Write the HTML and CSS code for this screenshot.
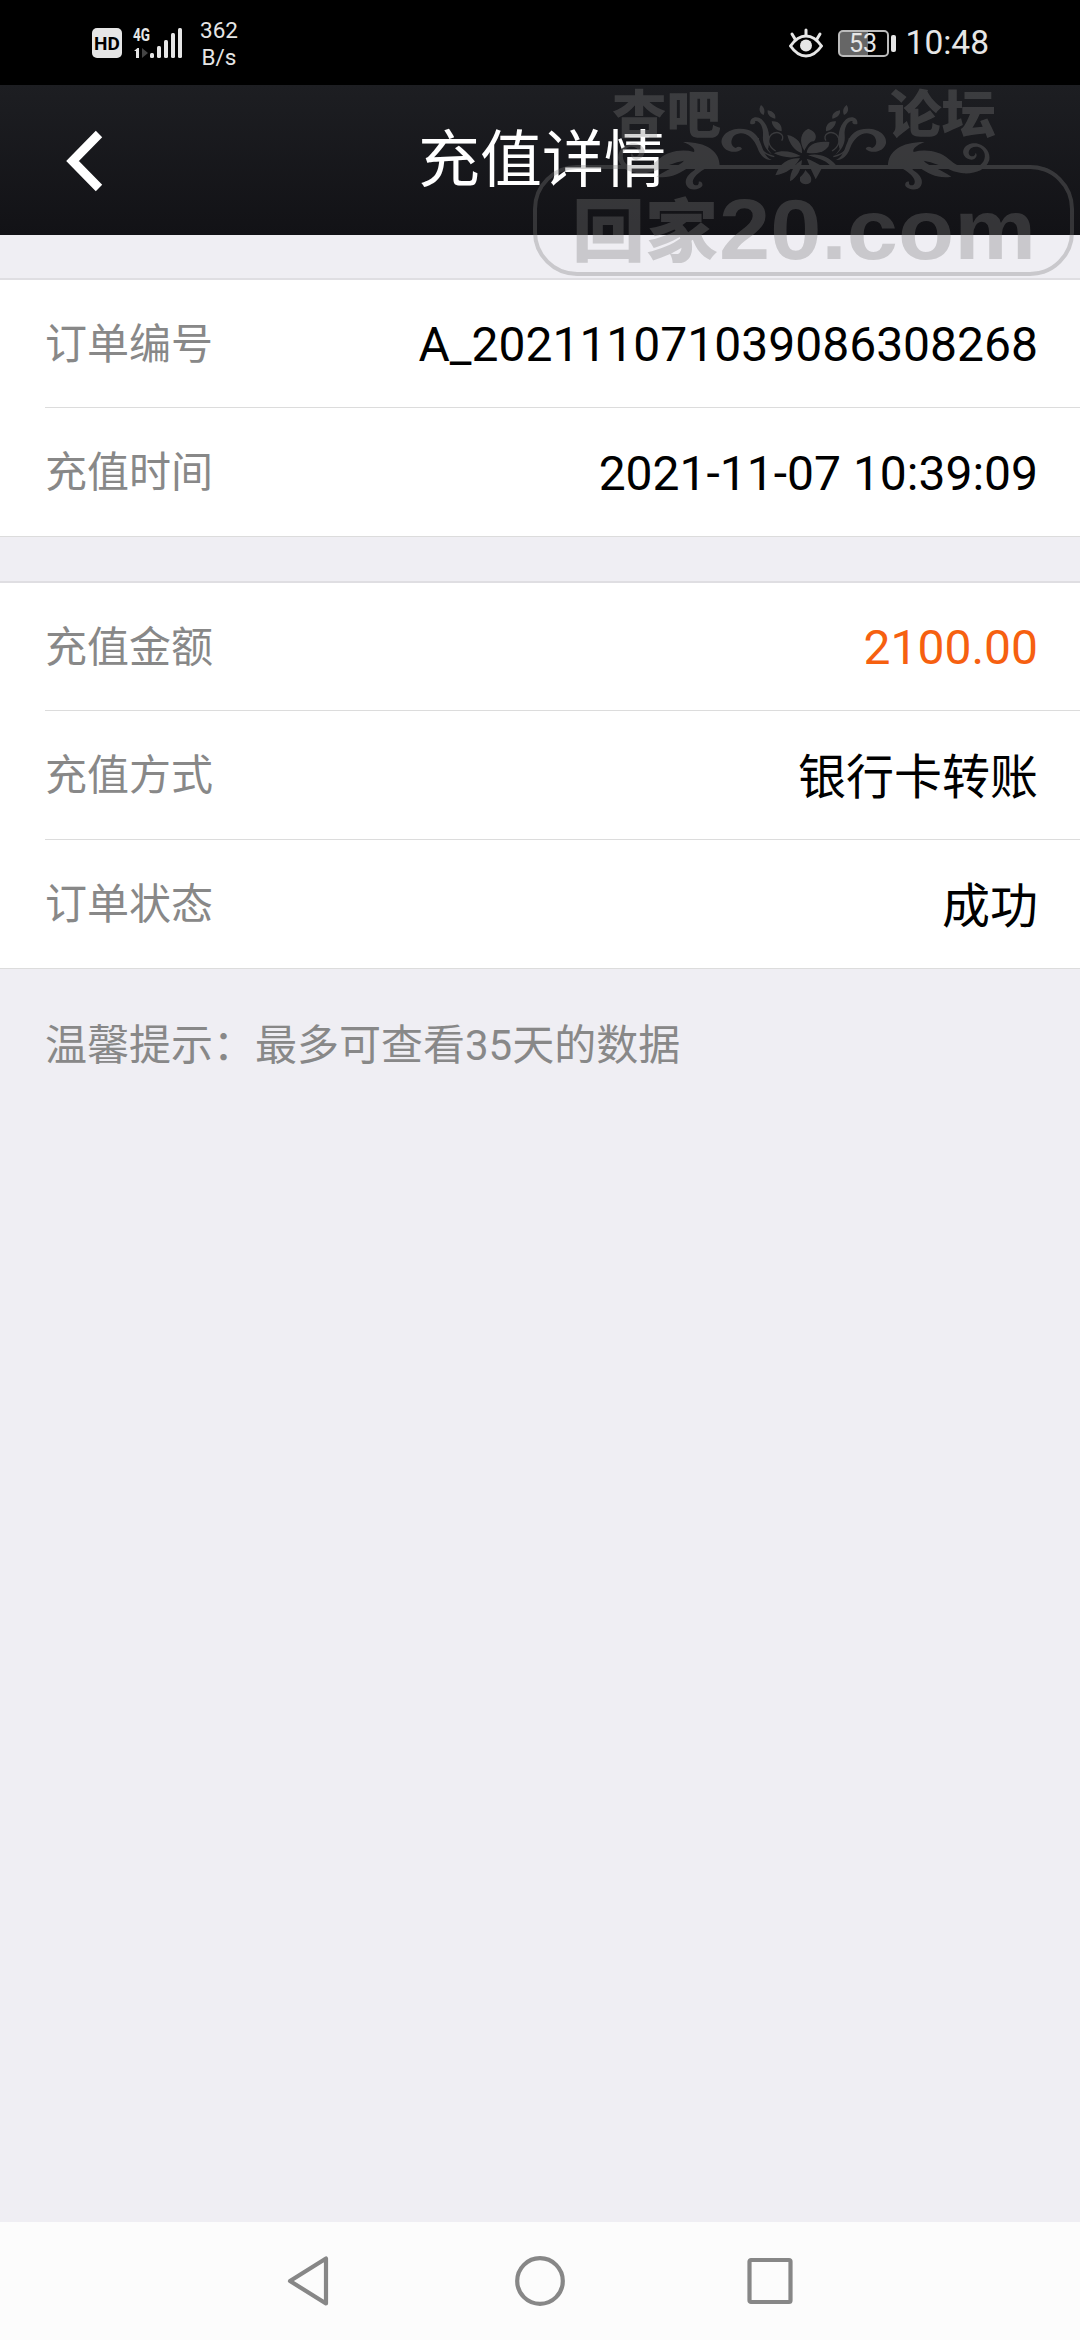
FILE: index.html
```
<!DOCTYPE html>
<html lang="zh-CN">
<head>
  <meta charset="UTF-8">
  <meta name="viewport" content="width=device-width, initial-scale=1.0">
  <title>充值详情</title>
  <link rel="stylesheet" href="styles.css">
</head>
<body>
  <div class="page">
    <!-- Status bar -->
    <div class="status-bar">
      <div class="status-left">
        <span class="hd">HD</span>
        <svg class="signal" width="50" height="34" viewBox="0 0 50 34">
          <text class="signal-text" x="0" y="15" textLength="17" lengthAdjust="spacingAndGlyphs">4G</text>
          <path d="M1 25L4.500 22H6V32H3V25Z" fill="#e6e6e6"/>
          <path d="M9 22V32L15 27Z" fill="#444"/>
          <g fill="#e6e6e6">
            <rect x="17" y="27" width="4" height="5" rx="1.500"/>
            <rect x="24" y="20" width="4" height="12" rx="1.500"/>
            <rect x="31" y="14" width="4" height="18" rx="1.500"/>
            <rect x="38" y="7" width="4" height="25" rx="1.500"/>
            <rect x="45" y="2" width="4" height="30" rx="1.500"/>
          </g>
        </svg>
        <div class="speed"><span>362</span><span>B/s</span></div>
      </div>
      <div class="status-right">
        <svg class="eye" width="34" height="30" viewBox="0 0 34 30" fill="none" stroke="#e6e6e6" stroke-width="3" stroke-linecap="round">
          <path d="M1.500 18C7 10 12 8 17 8S27 10 32.500 18C27 26 22 28 17 28S7 26 1.500 18Z" stroke-linejoin="round"/>
          <path d="M17 2V7M3 6L6 11M31 6L28 11"/>
          <circle cx="17" cy="17.500" r="6" fill="#e6e6e6" stroke="none"/>
        </svg>
        <div class="battery">53</div>
        <span class="clock">10:48</span>
      </div>
    </div>

    <!-- Header -->
    <header class="header">
      <svg class="back" width="38" height="62" viewBox="0 0 38 62">
        <path d="M33 4L6.500 31L33 58" fill="none" stroke="#fff" stroke-width="9"/>
      </svg>
      <h1>充值详情</h1>
    </header>

    <!-- Order -->
    <div class="card">
      <div class="row"><span class="label">订单编号</span><span class="value">A_202111071039086308268</span></div>
      <div class="row"><span class="label">充值时间</span><span class="value">2021-11-07 10:39:09</span></div>
    </div>

    <!-- Payment -->
    <div class="card">
      <div class="row"><span class="label">充值金额</span><span class="value amount">2100.00</span></div>
      <div class="row"><span class="label">充值方式</span><span class="value cn">银行卡转账</span></div>
      <div class="row"><span class="label">订单状态</span><span class="value cn">成功</span></div>
    </div>

    <p class="tip">温馨提示：最多可查看35天的数据</p>

    <!-- Bottom navigation -->
    <div class="nav">
      <svg width="50" height="54" viewBox="0 0 50 54"><path d="M41 4.500V49.500L5 27Z"/></svg>
      <svg width="54" height="54" viewBox="0 0 54 54"><circle cx="27" cy="27" r="22.800"/></svg>
      <svg width="50" height="54" viewBox="0 0 50 54"><rect x="4.500" y="6" width="41" height="42" rx="1.500"/></svg>
    </div>

    <!-- Watermark -->
    <svg class="watermark" width="560" height="200" viewBox="520 85 560 200">
      <defs>
        <g id="flourish">
          <path d="M264 258C264 214 302 186 374 186C348 196 336 208 341 216C378 206 420 214 446 237C466 254 486 266 510 266C542 264 558 242 554 222C550 203 530 195 514 204C503 212 504 226 514 229C521 230 526 225 527 218C534 226 528 238 514 239C496 238 485 222 491 208C498 192 518 188 534 191C558 197 572 219 568 240C558 270 526 282 490 280C462 278 440 264 418 256C400 248 382 244 371 242C384 258 425 268 454 290C420 297 386 284 358 262C335 248 326 260 344 274C362 286 371 303 363 317C354 333 327 331 316 318C314 309 319 304 327 305C325 314 333 319 341 314C352 302 336 282 308 266L292 258Z"/>
          <path d="M108 240C146 222 130 164 180 149C220 138 262 158 258 190C251 218 214 222 197 207C200 199 209 199 216 204C229 200 234 184 222 168C198 148 164 166 150 205C142 230 124 242 108 240Z"/>
          <path d="M118 205C112 172 115 140 138 118C152 105 176 112 172 132C162 135 154 130 158 123C144 120 132 142 134 164C136 188 130 206 104 226C116 214 122 204 118 205Z"/>
          <path d="M78 154C76 136 86 122 108 124C106 140 94 152 78 154ZM97 116C95 103 103 94 120 91C122 104 112 114 97 116ZM132 105C127 93 130 82 140 75C148 88 145 99 132 105Z"/>
          <path d="M78 182C66 164 90 150 108 163C124 178 118 200 96 213M148 174C150 204 134 222 100 230" fill="none" stroke="#7d7d7d" stroke-width="4"/>
        </g>
      </defs>
      <g class="mark">
        <rect x="535" y="167" width="537" height="107" rx="42" fill="none" stroke="#7d7d7d" stroke-width="4"/>
        <g transform="translate(800 80) scale(.3333)">
          <use href="#flourish"/>
          <use href="#flourish" transform="translate(23 0) scale(-1 1)"/>
          <!-- centre flower -->
          <path d="M13 212C-4 184 2 156 25 146C48 154 53 172 42 184C29 182 22 196 13 212Z"/>
          <path d="M6 220C-18 212 -32 190 -38 165C-10 170 8 190 6 220Z"/>
          <path d="M20 218C24 192 50 182 88 186C90 206 62 226 20 218Z"/>
          <path d="M2 228C-24 216 -50 208 -78 220C-54 232 -24 236 2 228Z"/>
          <path d="M0 235C-30 232 -60 246 -74 286C-42 282 -14 262 0 235Z"/>
          <path d="M6 240C-16 252 -30 274 -30 304C-8 292 4 268 6 240Z"/>
          <path d="M24 226C52 218 88 228 108 256H90C76 240 50 234 24 226Z"/>
          <path d="M20 236C34 240 52 250 68 260L47 298L34 270Z"/>
          <path d="M0 292C8 284 13 278 16 270C26 282 39 292 32 307C24 316 7 315 0 303Z"/>
        </g>
        <text class="mark-small" x="612" y="132.500" textLength="109" lengthAdjust="spacingAndGlyphs">杏吧</text>
        <text class="mark-small" x="887" y="132.500" textLength="109" lengthAdjust="spacingAndGlyphs">论坛</text>
        <text class="mark-cn" x="572" y="256" textLength="146" lengthAdjust="spacingAndGlyphs">回家</text>
        <text class="mark-en" x="719" y="259" textLength="317" lengthAdjust="spacingAndGlyphs">20.com</text>
      </g>
    </svg>
  </div>
</body>
</html>
```
FILE: styles.css
```
* {
  box-sizing: border-box;
}

body {
  margin: 0;
  background: #efeef3;
  font-family: Roboto, "Noto Sans CJK SC", sans-serif;
}

.page {
  position: relative;
  display: flex;
  flex-direction: column;
  width: 1080px;
  height: 2340px;
  overflow: hidden;
}

.status-bar {
  display: flex;
  justify-content: space-between;
  height: 85px;
  padding: 1px 91px 0 92px;
  background: #000;
  color: #e6e6e6;
}

.status-left, .status-right {
  display: flex;
  align-items: center;
}

.hd {
  width: 30px;
  height: 30px;
  border-radius: 5px;
  background: #e6e6e6;
  color: #000;
  font-size: 19px;
  font-weight: bold;
  line-height: 31px;
  text-align: center;
}

.signal {
  margin-left: 11px;
  overflow: visible;
}

.signal-text {
  fill: #e6e6e6;
  font-size: 19px;
  font-weight: bold;
}

.speed {
  display: flex;
  flex-direction: column;
  width: 42px;
  margin-left: 15px;
  padding-top: 2px;
  font-size: 22.500px;
  line-height: 27px;
  text-align: center;
}

.battery {
  position: relative;
  width: 51px;
  height: 27px;
  margin-left: 15px;
  border: 2px solid #bbb;
  border-radius: 5px;
  background: linear-gradient(90deg, #666 60%, #000 60%);
  font-size: 25px;
  line-height: 24px;
  text-align: center;
}

.battery::after {
  content: '';
  position: absolute;
  top: 3px;
  right: -9px;
  width: 5px;
  height: 17px;
  border-radius: 2px;
  background: #e6e6e6;
}

.clock {
  margin-left: 17px;
  font-size: 33.500px;
  line-height: 40px;
}

.header {
  display: flex;
  align-items: center;
  height: 150px;
  padding: 2px 0 0 66px;
  background: linear-gradient(#1d1e22, #121216);
  color: #fff;
}

.header h1 {
  margin: 0 0 0 314px;
  font-size: 62px;
  font-weight: normal;
  line-height: 90px;
}

.card {
  margin-top: 43px;
  border-top: 2px solid #dfdee2;
  background: #fff;
}

.card + .card {
  margin-top: 44px;
}

.row {
  display: flex;
  align-items: center;
  justify-content: space-between;
  height: 129px;
  margin-left: 45px;
  padding-right: 42px;
  border-bottom: 1px solid #dcdcdc;
}

.row:first-child {
  height: 128px;
}

.row:last-child {
  margin-left: 0;
  padding-left: 45px;
}

.label {
  padding-bottom: 7px;
  color: #888;
  font-size: 42px;
}

.value {
  padding-top: 2px;
  color: #000;
  font-size: 48px;
}

.value.cn {
  padding: 0 0 4px;
}

.amount {
  color: #f66010;
}

.tip {
  margin: 46px 45px 0;
  color: #888;
  font-size: 42px;
  line-height: 62px;
}

.nav {
  display: flex;
  align-items: center;
  justify-content: center;
  gap: 178px;
  height: 118px;
  margin-top: auto;
  background: #fcfcfc;
}

.nav svg {
  fill: none;
  stroke: #878787;
  stroke-width: 4.200;
  stroke-linejoin: round;
}

/* watermark lies over the header */
.watermark {
  position: absolute;
  top: 85px;
  left: 520px;
  overflow: visible;
  pointer-events: none;
}

.mark {
  fill: #7d7d7d;
  opacity: 0.33;
}

.mark-small {
  font-family: "Noto Sans CJK SC", sans-serif;
  font-size: 51px;
  font-weight: 900;
}

.mark-cn {
  font-family: "Noto Sans CJK SC", sans-serif;
  font-size: 68px;
  font-weight: 900;
}

.mark-en {
  font-family: "Liberation Sans", Arial, sans-serif;
  font-size: 86px;
  font-weight: bold;
}
```
